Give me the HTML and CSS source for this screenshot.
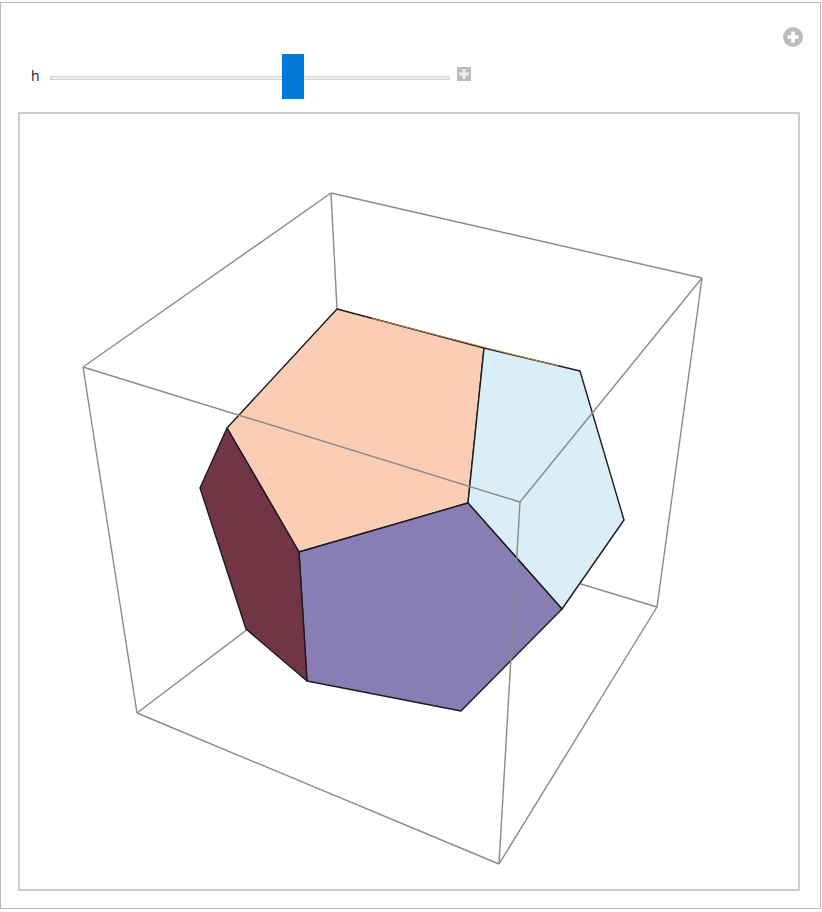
FILE: index.html
```html
<!DOCTYPE html>
<html lang="en">
<head>
    <meta charset="UTF-8">
    <meta name="viewport" content="width=device-width, initial-scale=1.0">
    <title>Dodecahedron</title>
    <link rel="stylesheet" href="styles.css">
</head>
<body>
    <div class="panel">
        <div class="top-row">
            <svg class="round-plus" width="20" height="20" viewBox="0 0 20 20">
                <circle cx="10" cy="10" r="10" fill="#bcbcbc"/>
                <path d="M10 4.5v11M4.5 10h11" stroke="#fff" stroke-width="3.6"/>
            </svg>
        </div>
        <div class="control-row">
            <span class="label">h</span>
            <div class="slider">
                <div class="track"></div>
                <div class="thumb"></div>
            </div>
            <svg class="square-plus" width="14" height="14" viewBox="0 0 14 14">
                <rect width="14" height="14" fill="#bdbdbd"/>
                <path d="M7 2v10M2 7h10" stroke="#ececec" stroke-width="3"/>
            </svg>
        </div>
        <div class="plot">
            <svg class="plot-svg" width="778" height="775" viewBox="20 114 778 775">
                <!-- back edges of the box -->
                <g class="box-line">
                    <path d="M331 193L702 278"/>
                    <path d="M331 193L83 367"/>
                    <path d="M331 193L337 309"/>
                    <path d="M702 278L657 607"/>
                    <path d="M83 367L137 713"/>
                    <path d="M137 713L499 864"/>
                    <path d="M499 864L657 607"/>
                    <path d="M137 713L385 525"/>
                    <path d="M657 607L385 525"/>
                </g>
                <g class="solid">
                    <polygon class="face-peach" points="337,309 484,348 468,503 299,552 227,428"/>
                    <polygon class="face-blue" points="484,348 580,371 624,520 562,609 468,503"/>
                    <polygon class="face-purple" points="468,503 562,609 461,711 307,681 299,552"/>
                    <polygon class="face-dark" points="227,428 299,552 307,681 246,629 200,488"/>
                </g>
                <path class="sliver" d="M372 318.5L558 366"/>
                <!-- front edges of the box -->
                <g class="box-line">
                    <path d="M83 367L520 502"/>
                    <path d="M702 278L520 502"/>
                    <path d="M520 502L499 864"/>
                </g>
            </svg>
        </div>
    </div>
</body>
</html>
```

FILE: styles.css
```css
* {
    padding: 0;
    margin: 0;
    box-sizing: border-box;
}

body {
    background: #fff;
    font-family: "Open Sans", sans-serif;
}

.panel {
    margin-top: 2px;
    width: 821px;
    height: 907px;
    border: 1px solid #b8b8b8;
    padding: 24px 21px 18px 17px;
}

.top-row {
    display: flex;
    justify-content: flex-end;
    height: 20px;
    margin-right: -4px;
}

.round-plus, .square-plus {
    filter: blur(0.4px);
}

.control-row {
    display: flex;
    align-items: center;
    height: 45px;
    margin-top: 7px;
}

.label {
    width: 32px;
    padding-left: 13px;
    font-size: 14px;
    line-height: 16px;
    color: #111;
    margin-top: -2px;
}

.slider {
    position: relative;
    width: 400px;
    height: 45px;
}

.track {
    margin-top: 22px;
    height: 4px;
    background: #eee;
    border: 1px solid #d2d2d2;
}

.thumb {
    position: absolute;
    left: 232px;
    top: 0;
    width: 22px;
    height: 45px;
    background: #0078d7;
}

.square-plus {
    margin-left: 7px;
    margin-top: -5px;
}

.plot {
    margin-top: 13px;
    width: 782px;
    height: 779px;
    border: 2px solid #cdcdcd;
}

.plot-svg {
    display: block;
}

.box-line path {
    fill: none;
    stroke: #8a8a8a;
    stroke-width: 1.4;
}

.solid polygon {
    stroke: #1a1a24;
    stroke-width: 1.4;
    stroke-linejoin: round;
}

.sliver {
    fill: none;
    stroke: #c8964f;
    stroke-width: 0.9;
}

.face-peach { fill: #fbcdb5; }
.face-blue { fill: #daeef7; }
.face-purple { fill: #887eb4; }
.face-dark { fill: #713546; }
```
